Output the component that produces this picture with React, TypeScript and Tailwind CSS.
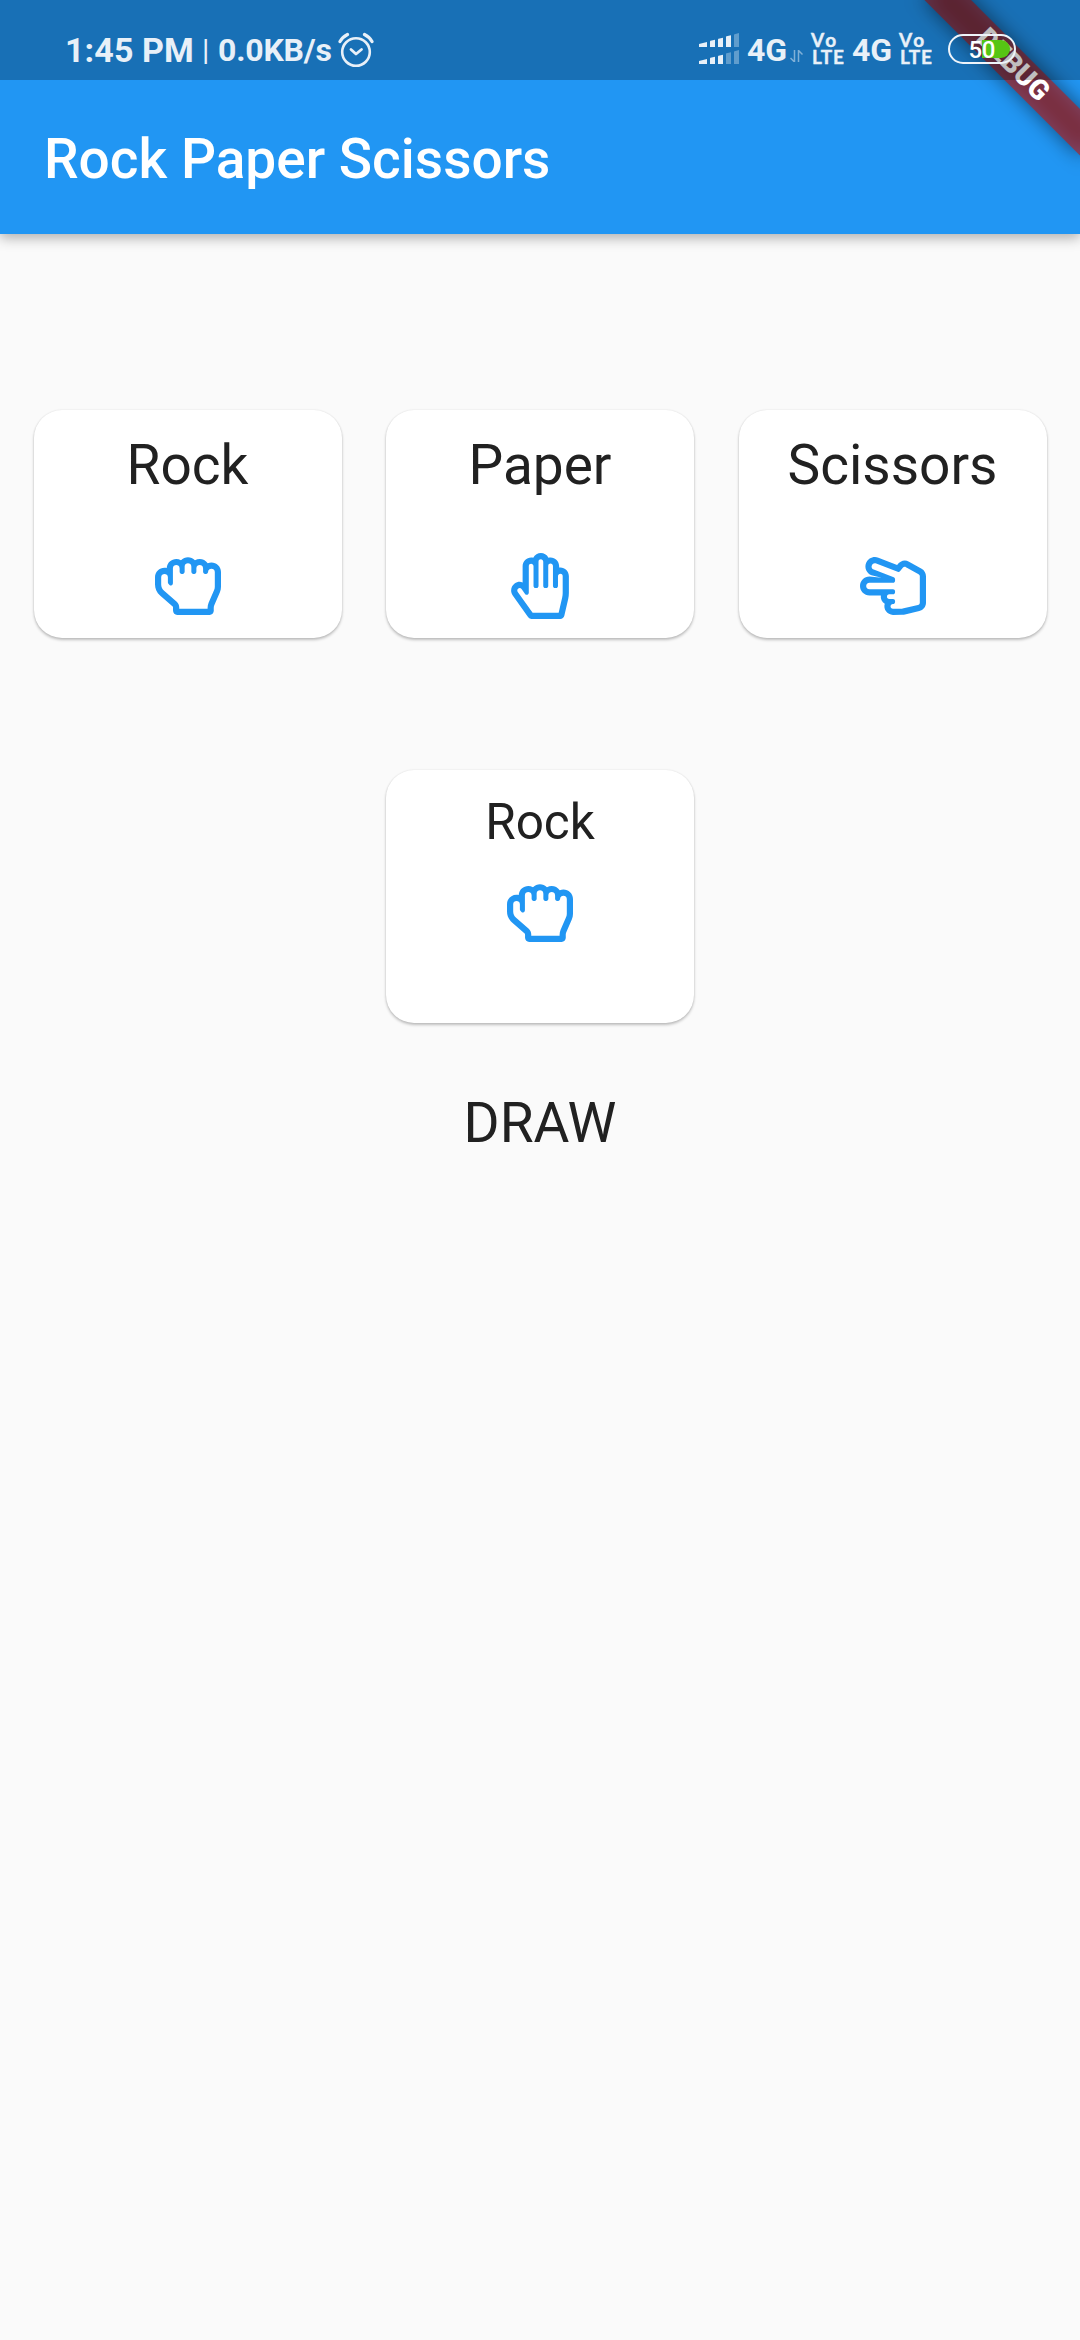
import type { ReactNode } from "react";
import { FaRegHandPaper, FaRegHandRock, FaRegHandScissors } from "react-icons/fa";

function SignalRow({ strength }: { strength: number }) {
  const bars = [
    "M0 11 L8 9 V14 H0Z",
    "M11 8.5 Q11 8 11.5 7.8 L16 6.7 V14 H11Z",
    "M19 6.5 Q19 6 19.5 5.8 L24 4.7 V14 H19Z",
    "M27 4 Q27 3.5 27.5 3.3 L32 2.2 V14 H27Z",
    "M35 2 Q35 1.5 35.5 1.3 L40 0 V14 H35Z",
  ];
  return (
    <svg className="block h-[14px] w-[40px]" viewBox="0 0 40 14" fill="#e8f0f8">
      {bars.map((d, i) => (
        <path key={d} d={d} opacity={i < strength ? 1 : 0.35} />
      ))}
    </svg>
  );
}

function VoLte() {
  return (
    <div className="-mt-[4px] flex h-[34px] w-[35px] flex-col font-['Lato'] text-[19px] leading-[17px] font-bold [-webkit-text-stroke:0.4px_#e8f0f8]">
      <span className="tracking-[2.5px]">Vo</span>
      <span className="ml-px tracking-[0.7px]">LTE</span>
    </div>
  );
}

function AlarmIcon() {
  return (
    <svg className="-ml-px h-[36px] w-[36px]" viewBox="0 0 36 36" fill="none" stroke="#e8f0f8" strokeLinecap="round" strokeLinejoin="round">
      <circle cx="18" cy="20" r="13.8" strokeWidth="2.6" />
      <path d="M13 17.5 L18 22 L23.500 17.500" strokeWidth="2.8" />
      <path d="M2 9.5 Q4.5 5 9.5 2.5 M34 9.5 Q31.500 5 26.500 2.500" strokeWidth="3.2" />
    </svg>
  );
}

function Battery() {
  return (
    <div className="relative h-[30px] w-[68px] rounded-full border-[2.5px] border-[#eef4fa]">
      <div className="absolute top-1 right-1 h-[18px] w-[28px] rounded-r-full bg-[#56c514]" />
      <span className="absolute top-0 left-[18.5px] text-[24px] leading-[28px] font-medium tracking-[-0.5px] text-white">50</span>
    </div>
  );
}

function StatusBar() {
  return (
    <div className="relative z-20 flex h-20 justify-between bg-black/25 pr-[64px] pl-[65px] text-[#e8f0f8]">
      <div className="mt-[32px] flex h-[36px] items-center font-bold whitespace-nowrap">
        <span className="w-[137px] text-[34px] leading-[36px] tracking-[0.1px]">1:45 PM</span>
        <span className="w-[16px] text-[30px] leading-[36px] font-normal">|</span>
        <span className="w-[121px] text-[32px] leading-[36px] tracking-[-0.2px]">0.0KB/s</span>
        <AlarmIcon />
      </div>
      <div className="mt-[32px] flex h-[36px] items-center whitespace-nowrap">
        <div className="-mt-[3px] mr-[8px] flex flex-col gap-[3px]">
          <SignalRow strength={4} />
          <SignalRow strength={3} />
        </div>
        <span className="w-[43px] text-[32px] leading-[36px] font-bold">4G</span>
        <svg className="mt-[11px] mr-[8px] h-[12px] w-[13px]" viewBox="0 0 13 12" fill="none" stroke="#e8f0f8" strokeWidth="1.5" opacity="0.5">
          <path d="M4.500 0 V12 L0.500 8 M8.500 12 V0.500 L12.500 4.500" />
        </svg>
        <VoLte />
        <span className="ml-[6px] w-[47px] text-[32px] leading-[36px] font-bold">4G</span>
        <VoLte />
        <div className="-mt-[2px] ml-[14px]">
          <Battery />
        </div>
      </div>
    </div>
  );
}

function DebugBanner() {
  return (
    <div className="pointer-events-none absolute top-0 right-0 z-10 h-[250px] w-[250px] overflow-hidden">
      <div className="absolute top-0 left-full h-0 w-0 rotate-45">
        <div className="absolute top-[77px] -left-[110px] h-[33px] w-[220px] bg-black/50 blur-[10px]" />
        <div className="absolute top-[77px] -left-[110px] h-[33px] w-[220px] bg-[#b71c1c]/63 pr-[3px] text-center text-[28px] leading-[31px] font-black text-white">
          DEBUG
        </div>
      </div>
    </div>
  );
}

function Card({ label, children }: { label: string; children: ReactNode }) {
  return (
    <div className="flex h-[228px] w-[308px] flex-col items-center justify-between rounded-[28px] bg-white pt-[22px] pb-[19px] shadow-[0_2px_3px_rgba(0,0,0,0.24),0_0_2px_rgba(0,0,0,0.10)]">
      <span className="text-[55px] leading-[66px]">{label}</span>
      {children}
    </div>
  );
}

export default function App() {
  return (
    <div className="flex h-[2340px] w-[1080px] flex-col overflow-hidden bg-[#fafafa] font-['Roboto',sans-serif] text-[#212121]">
      <header className="relative h-[234px] shrink-0 bg-[#2196f3] shadow-[0_4px_12px_rgba(0,0,0,0.30)]">
        <DebugBanner />
        <StatusBar />
        <h1 className="flex h-[154px] items-center pt-[4px] pl-[44px] text-[55px] leading-[64px] font-medium text-white">Rock Paper Scissors</h1>
      </header>
      <main className="flex flex-col items-center pt-[176px]">
        <div className="flex gap-[44.5px] text-[#2196f3] [&_span]:text-[#212121]">
          <Card label="Rock">
            <FaRegHandRock className="h-[66px] w-[66px]" />
          </Card>
          <Card label="Paper">
            <FaRegHandPaper className="h-[66px] w-[66px]" />
          </Card>
          <Card label="Scissors">
            <FaRegHandScissors className="h-[66px] w-[66px]" />
          </Card>
        </div>
        <div className="mt-[132px] flex h-[253px] w-[308px] flex-col items-center gap-[25px] rounded-[28px] bg-white pt-[19px] shadow-[0_2px_3px_rgba(0,0,0,0.24),0_0_2px_rgba(0,0,0,0.10)]">
          <span className="text-[49.5px] leading-[66px]">Rock</span>
          <FaRegHandRock className="h-[66px] w-[66px] text-[#2196f3]" />
        </div>
        <p className="mt-[67px] text-[55px] leading-[66px]">DRAW</p>
      </main>
    </div>
  );
}
